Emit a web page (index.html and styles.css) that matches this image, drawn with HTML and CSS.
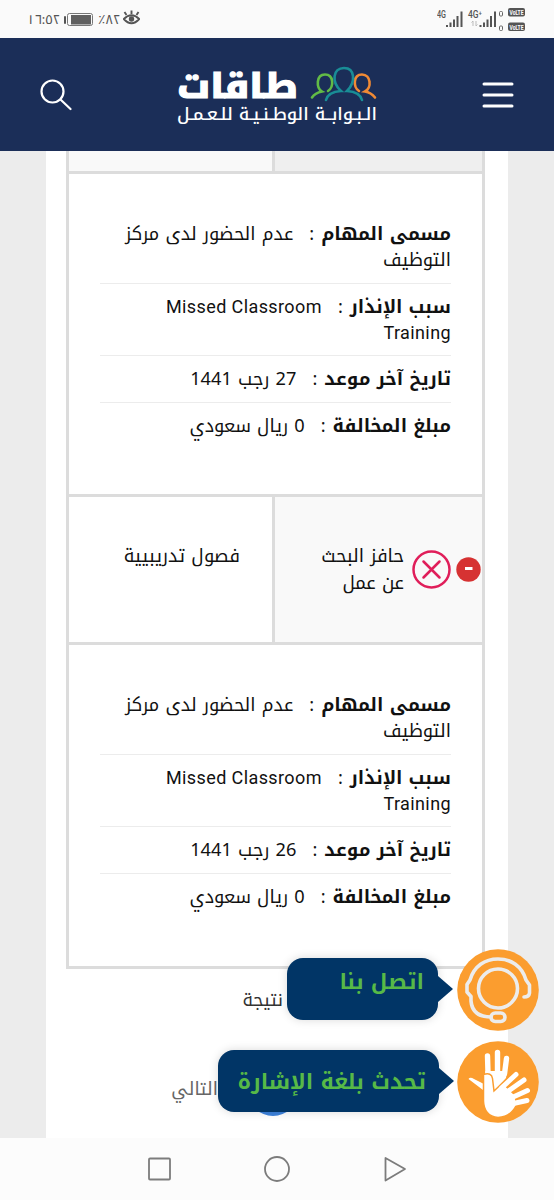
FILE: index.html
```
<!DOCTYPE html>
<html lang="ar">
<head>
<meta charset="utf-8">
<title>طاقات</title>
<link rel="stylesheet" href="styles.css">
</head>
<body>
<div class="screen">
  <header class="status">
    <div class="status-left">
      <span class="clock">١٦:٥٢</span>
      <svg class="battery" width="30" height="15" viewBox="0 0 30 15"><rect x="0" y="4" width="2" height="8" rx="1" fill="#555"/><rect x="3.500" y="1.500" width="25" height="12" rx="2" fill="none" stroke="#777"/><rect x="7" y="3" width="20" height="9.500" fill="#606060"/></svg>
      <span class="charge">٪٨٢</span>
      <svg class="eye" width="17" height="16" viewBox="0 0 17 16" fill="none" stroke="#555" stroke-width="1.900"><path d="M.8 9Q8.500 1.500 16.200 9Q8.500 17.500 .8 9ZM8.500 4V.5M3.500 5L1.500 2M13.500 5L15.500 2"/><circle cx="8.500" cy="9" r="2.700" fill="#555" stroke="none"/></svg>
    </div>
    <svg class="signals" width="90" height="28" viewBox="0 0 90 28" fill="#555">
      <g font-family="Roboto, sans-serif" font-size="10" font-weight="500"><text x="0" y="12" textLength="9" lengthAdjust="spacingAndGlyphs">4G</text><text x="31" y="12" textLength="14" lengthAdjust="spacingAndGlyphs">4G⁺</text></g>
      <path d="M9 19h2v2h-2zM12.500 16.500h2V21h-2zM16 13.500h2V21h-2zM19.500 10h2v11h-2zM23.500 5.500h2V21h-2zM42.500 19h2v2h-2zM46 16.500h2V21h-2zM49.500 13.500h2V21h-2zM53 10h2v11h-2zM57 5.500h2V21h-2z"/>
      <path d="M36 20v-5l-1.500 1.500M39 15v5l1.500-1.500" fill="none" stroke="#bbb"/>
      <g fill="none" stroke="#666"><rect x="62.500" y="5.500" width="3" height="4.500" rx="1"/><rect x="62.500" y="20" width="3" height="4.500" rx="1"/></g>
      <rect x="71" y="2" width="17" height="8.500" rx="2"/><rect x="71" y="16.500" width="17" height="8.500" rx="2"/>
      <g fill="#fff" font-family="Roboto, sans-serif" font-size="7.500" font-weight="700"><text x="72.500" y="9" textLength="14" lengthAdjust="spacingAndGlyphs">VoLTE</text><text x="72.500" y="23.500" textLength="14" lengthAdjust="spacingAndGlyphs">VoLTE</text></g>
    </svg>
  </header>

  <nav class="topbar">
    <svg class="search" width="32" height="32" viewBox="0 0 32 32" fill="none" stroke="#fff" stroke-width="2.200" stroke-linecap="round"><circle cx="12.500" cy="12.500" r="11"/><path d="M20.500 20.500L30.500 30"/></svg>
    <svg class="brand" width="204" height="70" viewBox="0 -3 204 70">
      <text class="wordmark" x="123" y="34.500" direction="rtl" textLength="121" lengthAdjust="spacingAndGlyphs">طاقات</text>
      <g fill="none" stroke-width="2.600" stroke-linecap="round"><path stroke="#62bb46" d="M137 34.500Q140 30 147 28.500C141 25 141 11.500 150 11.500C159 11.500 159 24 153 28"/><path stroke="#f08a35" d="M200 34.500Q196 29.500 190 28.500C197 25 196 11.500 187 11.500C178 11.500 178 24 184 28"/><path stroke="#198d96" d="M151 37Q153 29 166 28C156 19 158 5 169 5C180 5 181 19 172 28Q185 29 187 37"/></g>
      <text class="tagline" x="202" y="57" direction="rtl" textLength="200" lengthAdjust="spacingAndGlyphs">الـبـوابــة الوطـنـيـة للـعـمـل</text>
    </svg>
    <svg class="menu" width="32" height="28" viewBox="0 0 32 28" stroke="#fff" stroke-width="3" stroke-linecap="round"><path d="M2 3H30M2 14H30M2 25H30"/></svg>
  </nav>

  <main class="page" dir="rtl">
    <div class="table">
      <div class="row row-cut"><div class="cell cell-main"></div><div class="cell cell-side"></div></div>
      <div class="details">
        <p><b>مسمى المهام</b><i>:</i>عدم الحضور لدى مركز التوظيف</p>
        <p><b>سبب الإنذار</b><i>:</i><span class="latin">Missed Classroom Training</span></p>
        <p><b>تاريخ آخر موعد</b><i>:</i>27 رجب 1441</p>
        <p><b>مبلغ المخالفة</b><i>:</i>0 ريال سعودي</p>
      </div>
      <div class="row">
        <div class="cell cell-main">
          <svg class="minus" width="25" height="25" viewBox="0 0 25 25"><circle cx="12.500" cy="12.500" r="12.200" fill="#d63232"/><path d="M9 11.500H16.500" stroke="#fff" stroke-width="3"/></svg>
          <svg class="cross" width="39" height="39" viewBox="0 0 39 39" fill="none" stroke="#e01e5a" stroke-width="2.500" stroke-linecap="round"><circle cx="19.500" cy="19.500" r="18"/><path d="M11.500 11.500L27.500 27.500M27.500 11.500L11.500 27.500"/></svg>
          <span class="program">حافز البحث<br>عن عمل</span>
        </div>
        <div class="cell cell-side">فصول تدريبيية</div>
      </div>
      <div class="details">
        <p><b>مسمى المهام</b><i>:</i>عدم الحضور لدى مركز التوظيف</p>
        <p><b>سبب الإنذار</b><i>:</i><span class="latin">Missed Classroom Training</span></p>
        <p><b>تاريخ آخر موعد</b><i>:</i>26 رجب 1441</p>
        <p><b>مبلغ المخالفة</b><i>:</i>0 ريال سعودي</p>
      </div>
    </div>
    <div class="results">نتيجة</div>
    <div class="pager"><span class="current"></span><span class="next">التالي</span></div>
  </main>

  <footer class="android">
    <svg width="554" height="62" viewBox="0 0 554 62" fill="none" stroke="#7c7c7c" stroke-width="1.800" stroke-linejoin="round"><rect x="149" y="20.500" width="21" height="21" rx="1"/><circle cx="277" cy="31" r="12"/><path d="M385.500 20V42.500L405 31Z"/></svg>
  </footer>

  <aside class="float float-call">
    <div class="bubble bubble-call" dir="rtl">اتصل بنا</div>
    <svg class="disc" width="82" height="82" viewBox="0 0 82 82"><circle cx="41" cy="41" r="40.800" fill="#fb9d2f"/><g fill="none" stroke="#ececec" stroke-width="3.600" stroke-linejoin="round" stroke-linecap="round"><circle cx="41" cy="39.500" r="19.500"/><path d="M67 48Q72 48 72.500 44V36L69 31C65 17 54 10 41 10S17 17 13 31L10 35.500V43L14 47.500V52C15 63 22 68 34 68"/><rect x="34" y="64" width="14" height="8.500" rx="4.200"/></g></svg>
  </aside>
  <aside class="float float-sign">
    <div class="bubble bubble-sign" dir="rtl">تحدث بلغة الإشارة</div>
    <svg class="disc" width="82" height="82" viewBox="0 0 82 82"><circle cx="41" cy="41" r="40.800" fill="#fb9d2f"/><g fill="none" stroke="#fff" stroke-width="5.400" stroke-linecap="round"><path d="M31 32L30.500 15M40.500 31V11.500M47.500 33L49.500 17.500"/></g><path d="M11.500 38Q13 35.500 17 38L26 42.500V49Z" fill="#fff"/><path fill="#fff" d="M28.300 30H50L49 37L38 49L28.300 50Z"/><path fill="#fff" stroke="#fb9d2f" stroke-width="1.500" d="M26.500 33.500Q34.500 31 35.500 37.500L37 50L45.500 42L58 54L59.500 64Q53 76.500 41 76.500Q27 75 26.500 60Z"/><path d="M44.500 47L59 33.500M50 51L67 39M54 57L70.500 49.500M54 63L70 59.500" fill="none" stroke="#fff" stroke-width="5" stroke-linecap="round"/></svg>
  </aside>
</div>
</body>
</html>
```
FILE: styles.css
```
* { box-sizing: border-box; }
body { margin: 0; background: #ececec; }
.screen {
  position: relative;
  display: flex;
  flex-direction: column;
  width: 554px;
  height: 1200px;
  overflow: hidden;
  font-family: "Noto Kufi Arabic", "Droid Arabic Kufi", "Noto Sans", "Noto Sans Arabic", "DejaVu Sans", sans-serif;
  color: #111;
}
.status {
  display: flex;
  justify-content: space-between;
  height: 38px;
  padding: 6px 27px 0;
  background: #fafafa;
  flex: none;
}
.status-left { display: flex; align-items: center; height: 26px; color: #555; font-size: 13px; }
.status-left svg { flex: none; }
.clock { width: 37px; white-space: nowrap; }
.charge { width: 25px; margin-left: 4px; white-space: nowrap; }
.eye { margin-top: -2px; }
.topbar {
  display: flex;
  align-items: center;
  justify-content: space-between;
  height: 113px;
  padding: 0 40px;
  background: #1b2e58;
  flex: none;
}
.wordmark { font-size: 34px; font-weight: 800; fill: #fff; stroke: #fff; stroke-width: 1.2px; }
.tagline { font-size: 17px; font-weight: 500; fill: #fff; }
.page {
  display: flex;
  flex-direction: column;
  flex: 1;
  width: 462px;
  margin-left: 46px;
  padding: 0 23px 0 20px;
  background: #fff;
}
.table { border: solid #dcdcdc; border-width: 0 3px 3px; }
.row { display: flex; height: 145px; }
.row-cut { height: 20px; }
.cell { display: flex; align-items: center; font-size: 18.3px; line-height: 27px; }
.cell-main { width: 210px; background: #f9f9f9; border-left: 3px solid #dcdcdc; padding: 0 1px 0 0; }
.row-cut .cell-main { background: #efefef; }
.cell-side { flex: 1; padding: 0 32px 26px 0; }
.row-cut .cell-side { background: #f9f9f9; padding: 0; }
.cross { margin-right: 5px; }
.program { margin-right: 8px; white-space: nowrap; }
.details {
  height: 326px;
  padding: 37px 31px 0;
  border: solid #dcdcdc;
  border-width: 3px 0;
}
.table .details:last-child { border-bottom: 0; height: 324px; }
.details p {
  margin: 0;
  padding: 9.8px 0 9.1px;
  border-bottom: 1px solid #ececec;
  font-size: 18.2px;
  line-height: 26.4px;
}
.details p:last-child { border: 0; }
.details b { font-size: 18.4px; font-weight: 700; }
.details i { font-style: normal; margin: 0 7px 0 16px; }
.latin { font-family: Roboto, sans-serif; font-size: 18px; letter-spacing: .4px; }
.results { padding: 18px 202px 0 0; font-size: 18px; line-height: 27px; color: #333; }
.pager { display: flex; align-items: center; height: 50px; margin-top: 52px; padding-right: 187px; }
.current { flex: none; width: 50px; height: 50px; border-radius: 50%; background: #3c82dc; }
.next { margin: -4px 30px 0 0; font-size: 18px; color: #666; }
.android { height: 62px; background: #fcfcfc; flex: none; }
.android svg, .disc { display: block; }
.float { position: absolute; right: 15px; display: flex; align-items: flex-start; gap: 18px; }
.float-call { top: 949px; }
.float-sign { top: 1041px; }
.bubble {
  position: relative;
  height: 62px;
  margin-top: 9px;
  border-radius: 16px;
  background: #013566;
  color: #57b947;
  font-size: 21.6px;
  font-weight: 700;
  white-space: nowrap;
  box-shadow: 0 0 10px rgba(0, 0, 0, .15);
}
.bubble::after {
  content: "";
  position: absolute;
  left: 100%;
  top: 18px;
  border: solid transparent;
  border-width: 13px 0 13px 15px;
  border-left-color: #013566;
}
.bubble-call { width: 151px; padding-right: 14px; line-height: 48px; margin-right: 1px; }
.bubble-sign { width: 221px; padding-right: 13px; line-height: 64px; }
```
